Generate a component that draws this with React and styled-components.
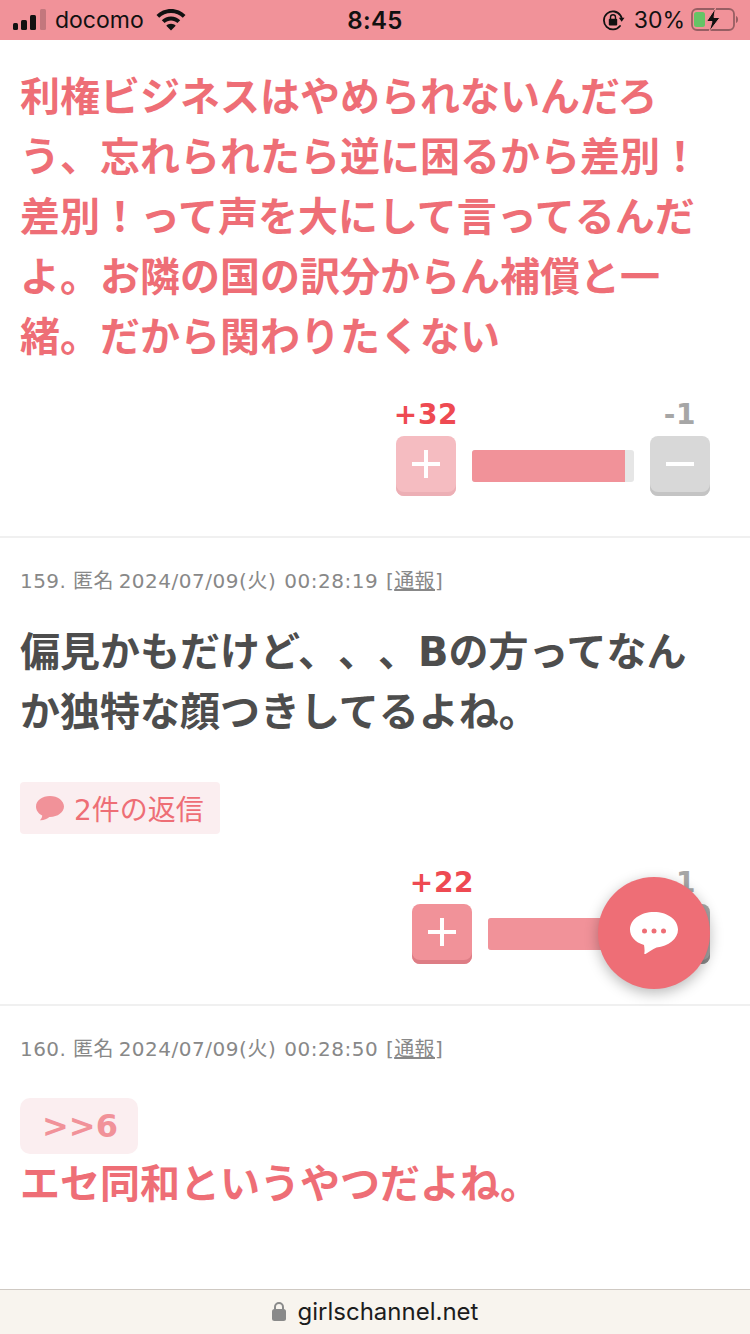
import React from 'react';
import styled, { createGlobalStyle } from 'styled-components';

const GlobalStyle = createGlobalStyle`
  html, body {
    margin: 0;
    padding: 0;
    background: #fff;
  }
`;

const Page = styled.div`
  position: relative;
  display: flex;
  flex-direction: column;
  width: 750px;
  height: 1334px;
  overflow: hidden;
  background: #fff;
  font-family: "DejaVu Sans", "Noto Sans CJK JP", sans-serif;
  text-spacing-trim: space-all;
`;

const StatusBar = styled.div`
  display: grid;
  grid-template-columns: 1fr auto 1fr;
  align-items: center;
  flex: none;
  height: 40px;
  padding: 0 11px;
  background: #f19299;
  color: #111;
  font-family: Inter, "Liberation Sans", sans-serif;
  font-size: 23px;
`;

const StatusLeft = styled.div`
  display: flex;
  align-items: center;
  padding-left: 2px;
`;

const Carrier = styled.span`
  margin: 0 12px 0 9px;
`;

const Clock = styled.span`
  font-size: 24px;
  font-weight: 600;
  letter-spacing: 0.3px;
`;

const StatusRight = styled.div`
  display: flex;
  align-items: center;
  justify-content: flex-end;
`;

const Percent = styled.span`
  margin: 0 6px 0 9px;
`;

const Content = styled.main`
  flex: 1;
  min-height: 0;
`;

const Comment = styled.section`
  padding: ${(p) => p.$top}px 20px 0 20px;
  border-bottom: ${(p) => (p.$last ? 'none' : '2px solid #f0f0f0')};
  height: ${(p) => p.$height}px;
  box-sizing: border-box;
`;

const Meta = styled.div`
  height: 40px;
  margin-bottom: 21px;
  padding-top: 5px;
  box-sizing: border-box;
  font-size: 20px;
  line-height: 30px;
  letter-spacing: 0.42px;
  color: #888;
`;

const Stamp = styled.span`
  margin: 0 1px 0 -2px;
  letter-spacing: 0.52px;
  word-spacing: 1px;
`;

const Report = styled.span`
  text-decoration: underline;
`;

const Body = styled.p`
  margin: 0;
  font-size: 40px;
  line-height: 60px;
  font-weight: 700;
  color: ${(p) => (p.$pink ? '#ee6e76' : '#4d4d4d')};
`;

const ReplyTag = styled.div`
  display: inline-flex;
  align-items: center;
  gap: 10px;
  height: 52px;
  margin-top: 40px;
  padding: 0 16px;
  border-radius: 4px;
  background: #fbeef0;
  color: #ee6e76;
  font-size: 28px;
`;

const AnchorTag = styled.div`
  display: inline-block;
  height: 56px;
  margin-top: 8px;
  padding: 0 20px 0 22px;
  border-radius: 10px;
  background: #fbeef0;
  color: #f19299;
  font-size: 32px;
  line-height: 56px;
  font-weight: 700;
  vertical-align: top;
`;

const Votes = styled.div`
  display: grid;
  grid-template-columns: 60px ${(p) => p.$barWidth}px 60px;
  grid-template-rows: 32px 60px;
  column-gap: 16px;
  row-gap: 6px;
  justify-content: end;
  align-items: center;
  margin: ${(p) => p.$top}px 20px 0 0;
`;

const Count = styled.div`
  grid-column: ${(p) => (p.$minus ? 3 : 1)};
  justify-self: center;
  padding-top: 2px;
  font-size: 28px;
  line-height: 30px;
  font-weight: 700;
  letter-spacing: 0.7px;
  white-space: nowrap;
  color: ${(p) => (p.$minus ? '#a6a6a6' : '#ee4a52')};
`;

const VoteButton = styled.div`
  grid-row: 2;
  display: flex;
  align-items: center;
  justify-content: center;
  width: 60px;
  height: 60px;
  padding-bottom: 4px;
  box-sizing: border-box;
  border-radius: 8px;
  background: ${(p) => p.$bg};
  box-shadow: inset 0 -4px 0 ${(p) => p.$edge};
`;

const Bar = styled.div`
  grid-row: 2;
  height: 32px;
  border-radius: 3px;
  overflow: hidden;
  background: #e6e6e6;
`;

const BarFill = styled.div`
  height: 100%;
  background: #f19299;
`;

const Fab = styled.div`
  position: absolute;
  left: 598px;
  top: 877px;
  display: flex;
  align-items: center;
  justify-content: center;
  width: 112px;
  height: 112px;
  border-radius: 50%;
  background: #ee6e76;
  box-shadow: 0 4px 14px rgba(0, 0, 0, 0.28);
`;

const AddressBar = styled.footer`
  display: flex;
  align-items: center;
  justify-content: center;
  gap: 12px;
  flex: none;
  height: 45px;
  padding-bottom: 2px;
  box-sizing: border-box;
  border-top: 1px solid #cfc9c3;
  background: #f8f4ee;
  color: #1c1c1c;
  font-family: Inter, "Liberation Sans", sans-serif;
  font-size: 24px;
`;

const SignalIcon = () => (
  <svg width="33" height="22" viewBox="0 0 33 22">
    <rect x="0" y="14" width="5" height="7" rx="1.5" fill="#111" />
    <rect x="8" y="11" width="6" height="10" rx="1.5" fill="#111" />
    <rect x="17" y="6" width="6" height="15" rx="1.5" fill="#111" />
    <rect x="27" y="0" width="6" height="21" rx="1.5" fill="#111" fillOpacity="0.2" />
  </svg>
);

const WifiIcon = () => (
  <svg width="30" height="22" viewBox="0 0 30 22" fill="#111">
    <path d="M15 0C9.300 0 4.200 2.300 0.500 6L3.200 8.800C6.200 5.800 10.400 4 15 4s8.800 1.800 11.800 4.800L29.500 6C25.800 2.300 20.700 0 15 0z" />
    <path d="M15 7.500c-3.600 0-6.800 1.400-9.200 3.700l2.800 2.800c1.700-1.600 3.900-2.600 6.400-2.600s4.700 1 6.400 2.600l2.800-2.800c-2.400-2.300-5.600-3.700-9.200-3.700z" />
    <path d="M15 14.800c-1.800 0-3.500 0.700-4.700 1.900L15 21.500l4.700-4.800c-1.200-1.200-2.900-1.900-4.700-1.900z" />
  </svg>
);

const RotationLockIcon = () => (
  <svg width="22" height="22" viewBox="0 0 22 22" fill="none">
    <path d="M17 17A9 9 0 1 1 17.500 6.500L18.500 8.500" stroke="#111" strokeWidth="1.800" strokeLinecap="round" />
    <path d="M15.800 8.800h5.700l-2.800 4z" fill="#111" />
    <rect x="5.800" y="9.800" width="8.400" height="6.600" rx="1" fill="#111" />
    <path d="M7.500 10V8.200a2.500 2.500 0 0 1 5 0V10" stroke="#111" strokeWidth="1.400" />
  </svg>
);

const BatteryIcon = () => (
  <svg width="48" height="26" viewBox="0 0 48 26">
    <rect x="1" y="2" width="42" height="21" rx="5" fill="none" stroke="#111" strokeOpacity="0.4" strokeWidth="1.800" />
    <path d="M45 9c1.300 0.400 2 1.700 2 3.500s-0.700 3.100-2 3.500z" fill="#111" fillOpacity="0.4" />
    <rect x="3" y="5" width="11" height="15" rx="2.500" fill="#65c466" />
    <path d="M24.500 1L15.500 14.500h5.500l-3 10.500L29 10.500h-6z" fill="#111" stroke="#f19299" strokeWidth="1" />
  </svg>
);

const PlusIcon = () => (
  <svg width="28" height="28" viewBox="0 0 28 28">
    <rect x="12" y="0" width="4" height="28" fill="#fff" />
    <rect x="0" y="12" width="28" height="4" fill="#fff" />
  </svg>
);

const MinusIcon = () => (
  <svg width="28" height="28" viewBox="0 0 28 28">
    <rect x="0" y="12" width="28" height="4" fill="#fff" />
  </svg>
);

const BubbleIcon = () => (
  <svg width="28" height="25" viewBox="0 0 28 25">
    <path d="M14 0C6.300 0 0 4.600 0 10.500c0 4 2.600 7.300 6.200 9.100 0 1.700-0.800 3.300-2.200 4.700 3.400 0.400 7.200-1.800 9.400-3.400h0.600c7.700 0 14-4.600 14-10.400S21.700 0 14 0z" fill="#f19299" />
  </svg>
);

const ChatIcon = () => (
  <svg width="48" height="42" viewBox="0 0 48 42">
    <path d="M24 0C10.700 0 0 7.600 0 17.500c0 7 5 12.700 14 15.500 0.500 3 0.800 6 0.300 8.300-0.100 0.700 0.500 1 1.200 0.700 3-1.600 7-4.700 11-6.500C38.500 34 48 27 48 17.500 48 7.600 37.300 0 24 0z" fill="#fff" />
    <circle cx="14.500" cy="19" r="2.500" fill="#ee6e76" />
    <circle cx="24" cy="19" r="2.500" fill="#ee6e76" />
    <circle cx="33.500" cy="19" r="2.500" fill="#ee6e76" />
  </svg>
);

const LockIcon = () => (
  <svg width="14" height="19" viewBox="0 0 14 19">
    <path d="M3 8V5a4 4 0 0 1 8 0v3" fill="none" stroke="#8a8a8a" strokeWidth="2" />
    <rect x="0" y="7" width="14" height="12" rx="2.500" fill="#8a8a8a" />
  </svg>
);

const VoteRow = ({ plus, minus, percent, barWidth, top, faded }) => (
  <Votes $barWidth={barWidth} $top={top}>
    <Count>{plus}</Count>
    <Count $minus>{minus}</Count>
    <VoteButton $bg={faded ? '#f5bcc1' : '#f19299'} $edge={faded ? '#ecafb5' : '#dd7d85'}>
      <PlusIcon />
    </VoteButton>
    <Bar>
      <BarFill style={{ width: `${percent}%` }} />
    </Bar>
    <VoteButton $bg={faded ? '#d8d8d8' : '#a6a6a6'} $edge={faded ? '#c4c4c4' : '#8c8c8c'}>
      <MinusIcon />
    </VoteButton>
  </Votes>
);

const MetaLine = ({ no, date }) => (
  <Meta>
    {no}. 匿名 <Stamp>{date}</Stamp> [<Report>通報</Report>]
  </Meta>
);

export default function App() {
  return (
    <Page>
      <GlobalStyle />
      <StatusBar>
        <StatusLeft>
          <SignalIcon />
          <Carrier>docomo</Carrier>
          <WifiIcon />
        </StatusLeft>
        <Clock>8:45</Clock>
        <StatusRight>
          <RotationLockIcon />
          <Percent>30%</Percent>
          <BatteryIcon />
        </StatusRight>
      </StatusBar>

      <Content>
        <Comment $top={27} $height={498}>
          <Body $pink>
            利権ビジネスはやめられないんだろ<br />
            う、忘れられたら逆に困るから差別！<br />
            差別！って声を大にして言ってるんだ<br />
            よ。お隣の国の訳分からん補償と一<br />
            緒。だから関わりたくない
          </Body>
          <VoteRow plus="+32" minus="-1" percent={94.4} barWidth={162} top={31} faded />
        </Comment>

        <Comment $top={23} $height={468}>
          <MetaLine no="159" date="2024/07/09(火) 00:28:19" />
          <Body>
            偏見かもだけど、、、Bの方ってなん<br />
            か独特な顔つきしてるよね。
          </Body>
          <ReplyTag>
            <BubbleIcon />
            2件の返信
          </ReplyTag>
          <VoteRow plus="+22" minus="-1" percent={96} barWidth={146} top={32} />
        </Comment>

        <Comment $top={23} $height={240} $last>
          <MetaLine no="160" date="2024/07/09(火) 00:28:50" />
          <AnchorTag>&gt;&gt;6</AnchorTag>
          <Body $pink>エセ同和というやつだよね。</Body>
        </Comment>
      </Content>

      <Fab>
        <ChatIcon />
      </Fab>

      <AddressBar>
        <LockIcon />
        girlschannel.net
      </AddressBar>
    </Page>
  );
}
